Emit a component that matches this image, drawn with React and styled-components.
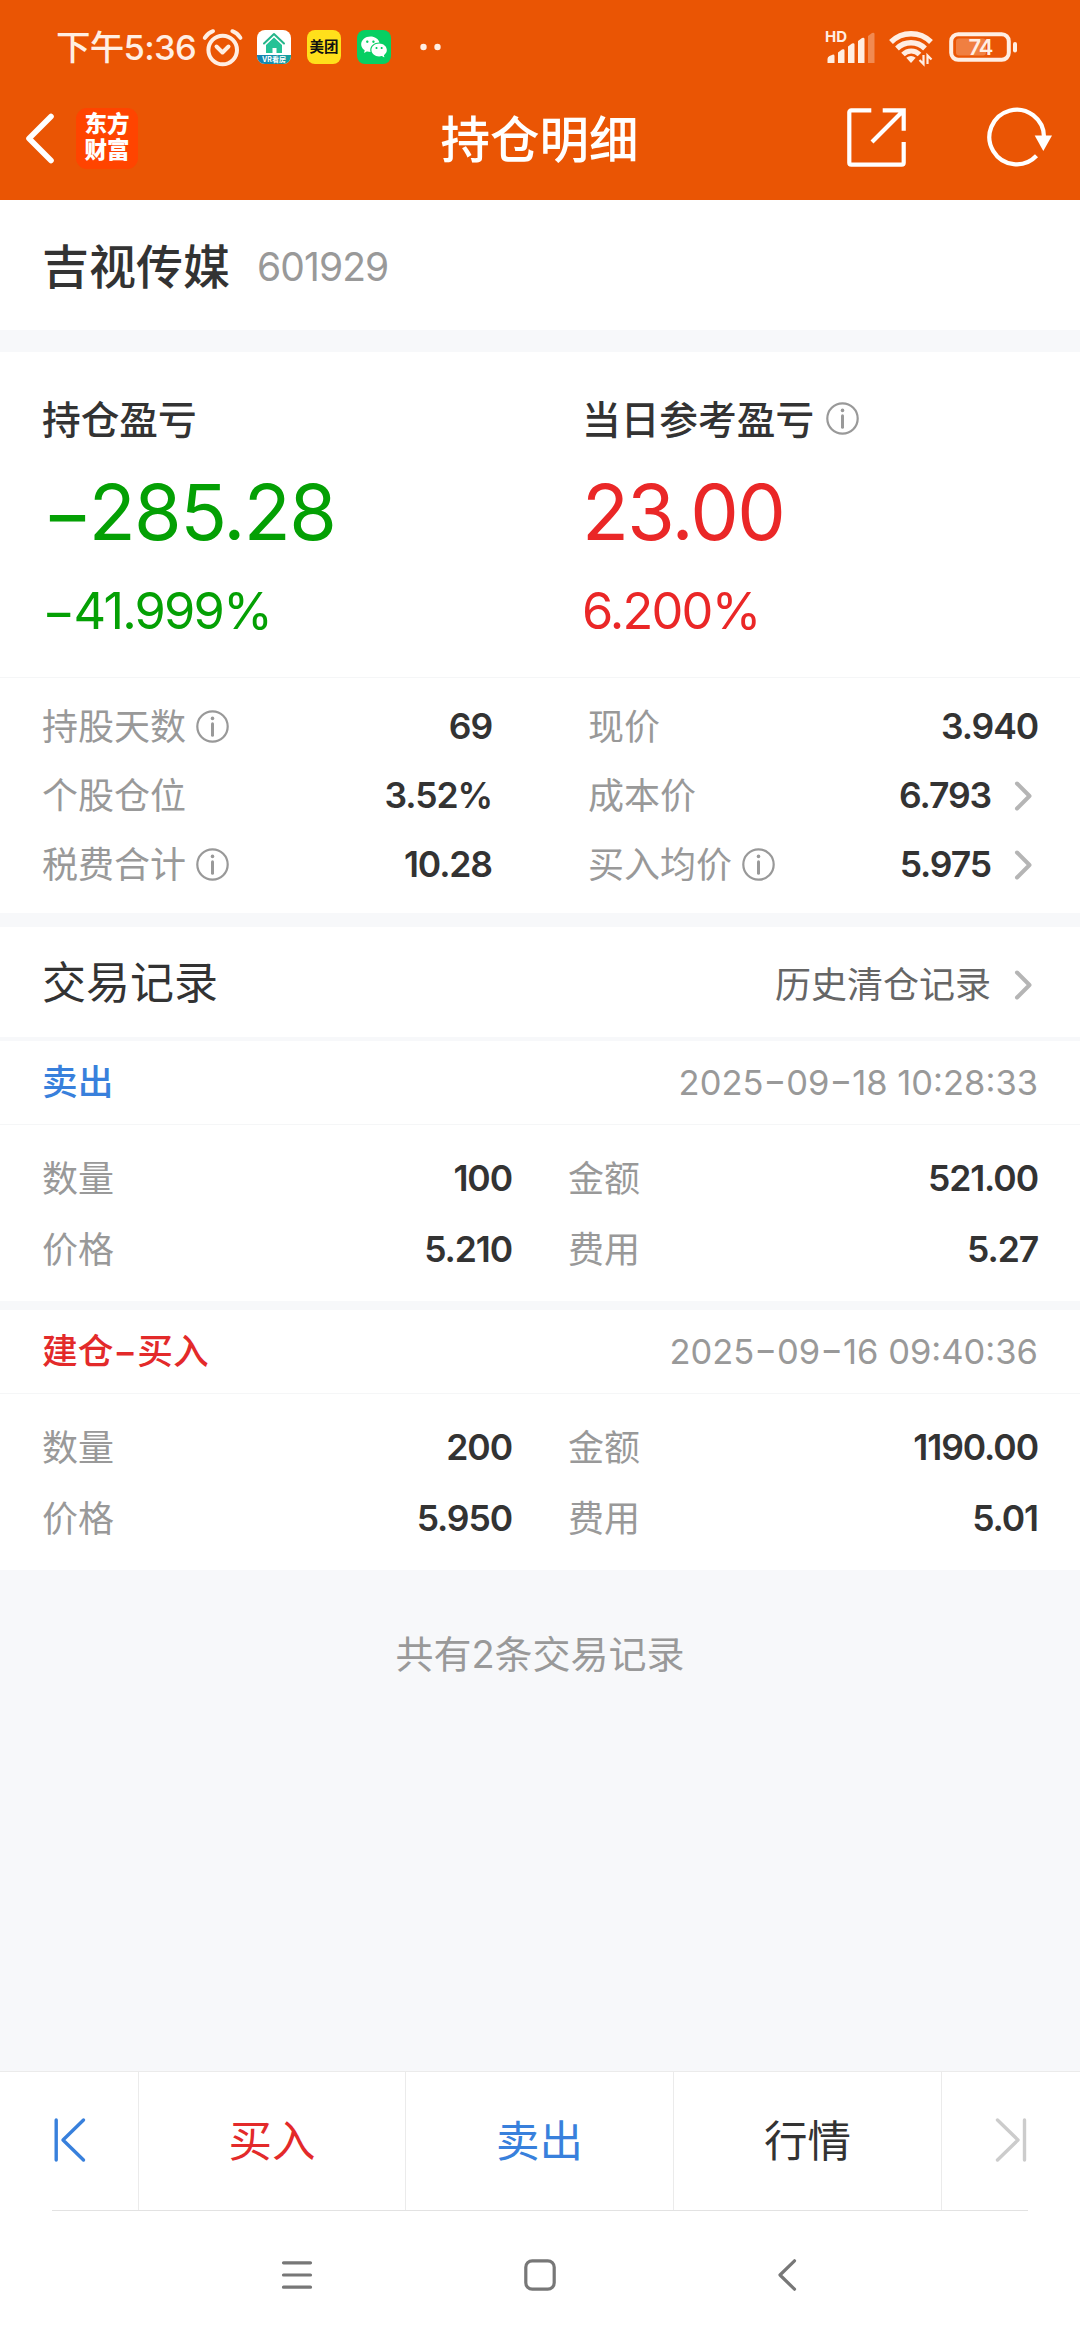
import styled, { createGlobalStyle } from "styled-components";
import { RiWechatFill } from "react-icons/ri";

const GlobalStyle = createGlobalStyle`
  * {
    box-sizing: border-box;
  }
  body {
    margin: 0;
    background: #f7f8fa;
    color: #333;
    font-family: Inter, "Noto Sans CJK SC", sans-serif;
  }
  svg {
    display: block;
    flex: none;
    overflow: visible;
  }
`;
const Page = styled.div`
  display: flex;
  flex-direction: column;
  width: 1080px;
  height: 2340px;
  overflow: hidden;
  white-space: nowrap;
`;
const Header = styled.header`
  height: 200px;
  background: #ea5504;
  color: #fff;
`;
const StatusBar = styled.div`
  display: flex;
  align-items: center;
  justify-content: space-between;
  height: 94px;
  padding: 0 62px 0 56px;
  color: #ffeee3;
`;
const StatusGroup = styled.div`
  display: flex;
  align-items: center;
`;
const Clock = styled.div`
  width: 146px;
  padding-top: 1px;
  font-size: 34.5px;
  font-weight: 500;
  line-height: 40px;
  letter-spacing: -0.7px;
`;
const AppIcons = styled.div`
  display: flex;
  gap: 16px;
  margin: 0 28px 0 14px;
`;
const AppIcon = styled.div`
  display: flex;
  flex-direction: column;
  align-items: center;
  justify-content: center;
  width: 34px;
  height: 34px;
  overflow: hidden;
  border-radius: 8px;
  background: ${(p) => p.$bg};
  color: ${(p) => p.$color || "#fff"};
  font-size: 14.5px;
  font-weight: 700;
  line-height: 20px;
`;
const HouseLabel = styled.div`
  width: 34px;
  height: 9px;
  background: linear-gradient(90deg, #1681b4, #15a29c);
  color: #fff;
  font-size: 7px;
  font-weight: 700;
  line-height: 9px;
  text-align: center;
`;
const TitleBar = styled.div`
  display: grid;
  grid-template-columns: 1fr auto 1fr;
  align-items: center;
  height: 88px;
  padding: 0 26px 0 25px;
`;
const BackArea = styled.div`
  display: flex;
  align-items: center;
  gap: 22px;
`;
const BrandLogo = styled.div`
  width: 62px;
  height: 61px;
  padding: 3px 0;
  border-radius: 11px;
  background: #ff4400;
  font-size: 22.5px;
  font-weight: 900;
  line-height: 26px;
  text-align: center;
`;
const Title = styled.h1`
  margin: 0;
  padding-top: 4px;
  font-size: 49.5px;
  font-weight: 500;
  line-height: 60px;
`;
const Actions = styled.div`
  display: flex;
  justify-content: flex-end;
  gap: 76px;
`;

const StockName = styled.section`
  display: flex;
  align-items: center;
  height: 130px;
  padding: 4px 42px 0;
  background: #fff;
  font-size: 47px;
  font-weight: 500;
  line-height: 60px;
`;
const StockCode = styled.span`
  margin-left: 27px;
  color: #999;
  font-size: 39px;
  font-weight: 400;
  letter-spacing: -0.9px;
`;
const Summary = styled.section`
  display: grid;
  grid-template-columns: 1fr 1fr;
  height: 326px;
  margin-top: 22px;
  padding-top: 38px;
  border-bottom: 1px solid #f5f6f7;
  background: #fff;
`;
const ProfitBox = styled.div`
  padding-left: 42px;
  color: ${(p) => p.$color};
`;
const ProfitLabel = styled.div`
  display: flex;
  align-items: center;
  gap: 12px;
  color: #333;
  font-size: 38.7px;
  font-weight: 500;
  line-height: 60px;

  svg {
    margin-bottom: 4px;
  }
`;
const ProfitAmount = styled.div`
  margin-top: 12px;
  font-size: 77px;
  line-height: 100px;
  letter-spacing: -1.6px;
`;
const ProfitPercent = styled.div`
  margin-top: 19px;
  font-size: 50.5px;
  line-height: 60px;
  letter-spacing: -1.8px;
`;

const Stats = styled.section`
  display: grid;
  grid-template-columns: 450px 450px;
  grid-auto-rows: 69px;
  column-gap: 96px;
  height: 235px;
  padding: 14px 42px 0;
  background: #fff;
`;
const StatCell = styled.div`
  display: flex;
  align-items: center;
  font-size: 36px;
  line-height: 50px;
`;
const Label = styled.span`
  display: flex;
  align-items: center;
  gap: 10px;
  color: #999;
`;
const Value = styled.span`
  margin-left: auto;
  font-size: 35.5px;
  font-weight: 600;
  letter-spacing: -1.1px;
`;
const ChevronBox = styled.span`
  margin: 0 5px 0 23px;
`;

const RecordsHead = styled.section`
  display: flex;
  align-items: center;
  height: 110px;
  margin-top: 14px;
  padding: 2px 42px 0;
  background: #fff;
  font-size: 44px;
  line-height: 60px;
`;
const HistoryLink = styled.div`
  display: flex;
  align-items: center;
  margin: 4px 0 0 auto;
  color: #666;
  font-size: 36px;
`;
const Record = styled.section`
  height: 260px;
  margin-top: ${(p) => p.$gap}px;
  background: #fff;
`;
const RecordHead = styled.div`
  display: flex;
  align-items: center;
  justify-content: space-between;
  height: 84px;
  padding: 0 42px;
  border-bottom: 1px solid #f5f6f7;
  line-height: 50px;
`;
const RecordType = styled.span`
  padding-bottom: 2px;
  color: ${(p) => p.$color};
  font-size: 35.7px;
  font-weight: 500;
`;
const RecordTime = styled.span`
  color: #999;
  font-size: 34.5px;
`;
const RecordBody = styled.div`
  display: grid;
  grid-template-columns: 470px 470px;
  grid-auto-rows: 71px;
  column-gap: 56px;
  padding: 18px 42px 0;
`;
const RecordTotal = styled.div`
  margin-top: 54px;
  color: #999;
  font-size: 38px;
  line-height: 60px;
  text-align: center;
`;

const Toolbar = styled.nav`
  display: grid;
  grid-template-columns: 138px 267px 268px 268px 139px;
  height: 139px;
  margin-top: auto;
  border-top: 1px solid #ebebeb;
  background: #fff;
`;
const ToolbarItem = styled.div`
  display: flex;
  align-items: center;
  justify-content: center;
  border-left: 1px solid ${(p) => (p.$first ? "transparent" : "#ebebeb")};
  color: ${(p) => p.$color};
  font-size: 43.5px;
  line-height: 60px;

  svg {
    margin-bottom: 3px;
  }
`;
const NavArea = styled.div`
  height: 130px;
  padding: 0 52px;
  background: #fff;
`;
const NavButtons = styled.div`
  display: flex;
  align-items: center;
  justify-content: center;
  gap: 211px;
  height: 129px;
  border-top: 1px solid #e2e2e2;
`;

const stroke = (width, color = "currentColor") => ({
  fill: "none",
  stroke: color,
  strokeWidth: width,
  strokeLinecap: "round",
  strokeLinejoin: "round",
});

const AlarmIcon = () => (
  <svg width="41" height="39" viewBox="0 0 41 39" {...stroke(4)}>
    <circle cx="20.7" cy="22" r="14.3" />
    <path d="M14.5 18.5l6 6 6-6M2.8 9.8Q6 5 11 3.2M30.4 3.2Q35.4 5 38.4 9.8" />
  </svg>
);
const HouseIcon = () => (
  <svg width="24" height="25" viewBox="0 0 24 25">
    <path d="M2 13.5L12 4l10 9.5" {...stroke(2, "#25b58a")} />
    <path d="M12 7.5l8 7.5v8h-5.5v-5h-4v5H4v-8z" fill="#25c296" />
  </svg>
);
const DotsIcon = () => (
  <svg width="22" height="8" viewBox="0 0 22 8" fill="currentColor">
    <circle cx="4.5" cy="4" r="3.2" />
    <circle cx="18.5" cy="4" r="3.2" />
  </svg>
);
const SignalIcon = () => (
  <svg width="55" height="38" viewBox="-4 -2 55 38" fill="currentColor">
    <text x="0" y="12" fontSize="15" fontWeight="700">HD</text>
    <path d="M2.5 33v-4q0-2 2-3l3-1.3q2-.4 2 1.3v7zM13 33V22.5l4-3q2.5-.8 2.5 1V33zM23 33V16.5l4-3q2.5-.8 2.5 1V33zM33 33V11l4-3q2.5-.8 2.5 1V33z" />
    <path d="M43 33V6l4-3q2.5-.8 2.5 1V33z" opacity=".35" />
  </svg>
);
const WifiIcon = () => (
  <svg width="48" height="36" viewBox="0 0 48 36" fill="none" stroke="currentColor" strokeWidth="5.4">
    <path d="M4 13A28.3 28.3 0 0 1 44 13" />
    <path d="M10 19.5A20 20 0 0 1 38 19.5" />
    <path d="M16 25.5A11.5 11.5 0 0 1 32.5 25.5" strokeWidth="5" />
    <path d="M19.3 28.8Q24 25 28.7 28.8L24 34z" fill="currentColor" stroke="none" />
    <path d="M36.5 26v9l-4-4M40.5 35v-8.5l4 4" strokeWidth="2.2" />
  </svg>
);
const BatteryIcon = () => (
  <svg width="69" height="32" viewBox="0 0 69 32" fill="currentColor">
    <rect x="2.2" y="3.2" width="57.6" height="25.6" rx="7" fill="none" stroke="currentColor" strokeWidth="4" />
    <rect x="7" y="7.5" width="30" height="17" rx="3" opacity=".28" />
    <rect x="64" y="11" width="4" height="10.5" rx="2" />
    <text x="31.5" y="24" fontSize="22" fontWeight="600" textAnchor="middle" letterSpacing="-1">74</text>
  </svg>
);
const BackIcon = () => (
  <svg width="29" height="51" viewBox="0 0 29 51" {...stroke(5.6)}>
    <path d="M26 3.5L4 25.5 26 47.5" />
  </svg>
);
const ShareIcon = () => (
  <svg width="64" height="64" viewBox="0 0 64 64" fill="none" stroke="currentColor" strokeWidth="4.2">
    <path d="M26.3 4.3H6.3a2 2 0 0 0-2 2V56.7a2 2 0 0 0 2 2H56.7a2 2 0 0 0 2-2V36" />
    <path d="M37.7 4.3H58.7V24.7M27 36L58 5" />
  </svg>
);
const RefreshIcon = () => (
  <svg width="69" height="64" viewBox="0 0 69 64" fill="none" stroke="currentColor" strokeWidth="4.2">
    <path d="M51.5 49.8A27.3 27.3 0 1 1 59 31" />
    <path d="M49.7 29.5H67L58.3 45z" fill="currentColor" stroke="none" />
  </svg>
);
const InfoIcon = () => (
  <svg width="33" height="33" viewBox="0 0 33 33" {...stroke(2.2, "#999")}>
    <circle cx="16.5" cy="16.5" r="15.2" />
    <path d="M16.5 13.8v11.5" strokeWidth="3" />
    <circle cx="16.5" cy="8.4" r="1.8" fill="#999" stroke="none" />
  </svg>
);
const ChevronIcon = () => (
  <ChevronBox>
    <svg width="19" height="30" viewBox="0 0 19 30" {...stroke(4, "#b5b5b5")}>
      <path d="M3 2.5L15.5 15 3 27.5" />
    </svg>
  </ChevronBox>
);
const FirstIcon = () => (
  <svg width="32" height="44" viewBox="0 0 32 44" {...stroke(3.4)}>
    <path d="M2.2 2V42M29.5 2L9 22 29.5 42" />
  </svg>
);
const LastIcon = () => (
  <svg width="32" height="44" viewBox="0 0 32 44" {...stroke(3.4)}>
    <path d="M29.5 2V42M2.5 2L23 22 2.5 42" />
  </svg>
);

const stats = [
  { label: "持股天数", value: "69", info: true },
  { label: "现价", value: "3.940" },
  { label: "个股仓位", value: "3.52%" },
  { label: "成本价", value: "6.793", link: true },
  { label: "税费合计", value: "10.28", info: true },
  { label: "买入均价", value: "5.975", info: true, link: true },
];

const records = [
  {
    type: "卖出",
    color: "#3880dc",
    time: "2025−09−18 10:28:33",
    gap: 4,
    items: [["数量", "100"], ["金额", "521.00"], ["价格", "5.210"], ["费用", "5.27"]],
  },
  {
    type: "建仓−买入",
    color: "#e32a2a",
    time: "2025−09−16 09:40:36",
    gap: 9,
    items: [["数量", "200"], ["金额", "1190.00"], ["价格", "5.950"], ["费用", "5.01"]],
  },
];

function App() {
  return (
    <>
      <GlobalStyle />
      <Page>
        <Header>
          <StatusBar>
            <StatusGroup>
              <Clock>下午5:36</Clock>
              <AlarmIcon />
              <AppIcons>
                <AppIcon $bg="#fff">
                  <HouseIcon />
                  <HouseLabel>VR看房</HouseLabel>
                </AppIcon>
                <AppIcon $bg="#ffe01b" $color="#111">美团</AppIcon>
                <AppIcon $bg="#07cf63">
                  <RiWechatFill size={28} />
                </AppIcon>
              </AppIcons>
              <DotsIcon />
            </StatusGroup>
            <StatusGroup>
              <SignalIcon />
              <svg width="11" height="1" />
              <WifiIcon />
              <svg width="14" height="1" />
              <BatteryIcon />
            </StatusGroup>
          </StatusBar>
          <TitleBar>
            <BackArea>
              <BackIcon />
              <BrandLogo>
                <div>东方</div>
                <div>财富</div>
              </BrandLogo>
            </BackArea>
            <Title>持仓明细</Title>
            <Actions>
              <ShareIcon />
              <RefreshIcon />
            </Actions>
          </TitleBar>
        </Header>

        <StockName>
          吉视传媒<StockCode>601929</StockCode>
        </StockName>

        <Summary>
          <ProfitBox $color="#04a004">
            <ProfitLabel>持仓盈亏</ProfitLabel>
            <ProfitAmount>−285.28</ProfitAmount>
            <ProfitPercent>−41.999%</ProfitPercent>
          </ProfitBox>
          <ProfitBox $color="#ea2727">
            <ProfitLabel>
              当日参考盈亏
              <InfoIcon />
            </ProfitLabel>
            <ProfitAmount>23.00</ProfitAmount>
            <ProfitPercent>6.200%</ProfitPercent>
          </ProfitBox>
        </Summary>

        <Stats>
          {stats.map((item) => (
            <StatCell key={item.label}>
              <Label>
                {item.label}
                {item.info && <InfoIcon />}
              </Label>
              <Value>{item.value}</Value>
              {item.link && <ChevronIcon />}
            </StatCell>
          ))}
        </Stats>

        <RecordsHead>
          交易记录
          <HistoryLink>
            历史清仓记录
            <ChevronIcon />
          </HistoryLink>
        </RecordsHead>

        {records.map((record) => (
          <Record key={record.time} $gap={record.gap}>
            <RecordHead>
              <RecordType $color={record.color}>{record.type}</RecordType>
              <RecordTime>{record.time}</RecordTime>
            </RecordHead>
            <RecordBody>
              {record.items.map(([label, value]) => (
                <StatCell key={label}>
                  <Label>{label}</Label>
                  <Value>{value}</Value>
                </StatCell>
              ))}
            </RecordBody>
          </Record>
        ))}
        <RecordTotal>共有2条交易记录</RecordTotal>

        <Toolbar>
          <ToolbarItem $first $color="#3880dc">
            <FirstIcon />
          </ToolbarItem>
          <ToolbarItem $color="#e32a2a">买入</ToolbarItem>
          <ToolbarItem $color="#3880dc">卖出</ToolbarItem>
          <ToolbarItem $color="#333">行情</ToolbarItem>
          <ToolbarItem $color="#ccc">
            <LastIcon />
          </ToolbarItem>
        </Toolbar>
        <NavArea>
          <NavButtons>
            <svg width="32" height="32" viewBox="0 0 32 32" {...stroke(3.2, "#777")}>
              <path d="M2.5 3.8h27M2.5 16h27M2.5 28.2h27" />
            </svg>
            <svg width="32" height="32" viewBox="0 0 32 32" {...stroke(3.2, "#777")}>
              <rect x="1.8" y="1.8" width="28.4" height="28.4" rx="6.5" />
            </svg>
            <svg width="32" height="32" viewBox="0 0 32 32" {...stroke(3.2, "#777")}>
              <path d="M27.5 1.8L13 16 27.5 30.2" />
            </svg>
          </NavButtons>
        </NavArea>
      </Page>
    </>
  );
}

export default App;
